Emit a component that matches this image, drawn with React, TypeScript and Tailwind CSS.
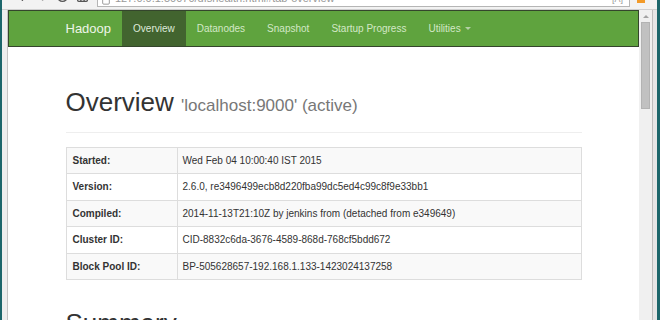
import React from 'react';
import { ArrowLeft, ArrowRight, RotateCw, Home, File } from 'lucide-react';

const rows = [
  { label: 'Started:', value: 'Wed Feb 04 10:00:40 IST 2015' },
  { label: 'Version:', value: '2.6.0, re3496499ecb8d220fba99dc5ed4c99c8f9e33bb1' },
  { label: 'Compiled:', value: '2014-11-13T21:10Z by jenkins from (detached from e349649)' },
  { label: 'Cluster ID:', value: 'CID-8832c6da-3676-4589-868d-768cf5bdd672' },
  { label: 'Block Pool ID:', value: 'BP-505628657-192.168.1.133-1423024137258' },
];

const navItems = ['Overview', 'Datanodes', 'Snapshot', 'Startup Progress', 'Utilities'];

const App: React.FC = () => {
  return (
    <div
      className="w-[660px] h-[320px] overflow-hidden flex bg-[#1c666b] text-[#333]"
      style={{ fontFamily: '"Liberation Sans", Arial, sans-serif' }}
    >
      <div className="w-[2px] shrink-0" />
      {/* browser window */}
      <div className="flex flex-col w-[655px] shrink-0 bg-[#ebebeb]">
        {/* chrome strip, mostly cut off */}
        <div className="h-[10px] flex items-start overflow-hidden border-b border-[#cfcfcf] bg-[#f2f2f2]">
          <div className="flex items-start gap-[7px] pl-[14px] w-[95px] -mt-[10px] text-[#555]">
            <ArrowLeft size={13} strokeWidth={2.5} />
            <ArrowRight size={13} strokeWidth={2.5} className="text-[#aaa]" />
            <RotateCw size={13} strokeWidth={2.5} />
            <Home size={13} strokeWidth={2.5} />
          </div>
          <div className="flex items-start w-[533px] h-[7px] bg-white border border-t-0 border-[#b5b5b5] overflow-hidden">
            <File size={10} className="text-[#888] ml-[3px] -mt-[5px] shrink-0" />
            <span className="text-[11px] leading-[13px] text-[#999] ml-[4px] -mt-[8px] whitespace-nowrap">
              127.0.0.1:50070/dfshealth.html#tab-overview
            </span>
            <span className="ml-auto mr-[6px] text-[9px] leading-[10px] -mt-[6px] text-[#999]">[A]</span>
          </div>
          <div className="ml-[7px] w-[8px] h-[3px] bg-[#f29a28]" />
        </div>

        <div className="flex flex-1 min-h-0">
          {/* left frame */}
          <div className="w-[6px] shrink-0 bg-[#eeeeee] border-r border-[#c4c4c4]" />

          {/* page viewport */}
          <div className="w-[631px] shrink-0 bg-white overflow-hidden">
            <nav className="h-[37px] bg-[#5fa33e] border border-[#34452c] flex">
              <div className="w-[516px] mx-auto flex items-stretch">
                <span className="flex items-center pr-[11px] text-[13px] text-[#eef5e8]">Hadoop</span>
                {navItems.map((item, i) => (
                  <span
                    key={item}
                    className={`flex items-center px-[11px] text-[10px] ${
                      i === 0 ? 'bg-[#42642f] text-[#dfeada]' : 'text-[#d3e8c6]'
                    }`}
                  >
                    {item}
                    {item === 'Utilities' && (
                      <span className="ml-[4px] w-0 h-0 border-x-[3px] border-t-[3px] border-x-transparent border-t-[#b4d0a6]" />
                    )}
                  </span>
                ))}
              </div>
            </nav>

            <div className="w-[516px] mx-auto">
              <div className="mt-[41px] pb-[11px] border-b border-[#eeeeee]">
                <h1 className="text-[26px] leading-[28.6px] whitespace-nowrap">
                  Overview{' '}
                  <span className="text-[17px] text-[#777]">'localhost:9000' (active)</span>
                </h1>
              </div>

              <div className="mt-[14px] border-x border-b border-[#dddddd] text-[10px]">
                {rows.map((row, i) => (
                  <div
                    key={row.label}
                    className={`flex h-[25.5px] box-content border-t border-[#dddddd] ${
                      i % 2 === 0 ? 'bg-[#f9f9f9]' : 'bg-white'
                    }`}
                  >
                    <div className="w-[111px] shrink-0 border-r border-[#dddddd] flex items-center pl-[6px] font-bold">
                      {row.label}
                    </div>
                    <div className="flex items-center pl-[5px] whitespace-nowrap">{row.value}</div>
                  </div>
                ))}
              </div>

              <h1 className="mt-[29px] text-[26px] leading-[28.6px]">Summary</h1>
            </div>
          </div>

          {/* scrollbar */}
          <div className="w-[13px] shrink-0 bg-[#f0f0f0] flex flex-col items-center">
            <span className="mt-[5px] w-0 h-0 border-x-[3px] border-b-[3px] border-x-transparent border-b-[#a3a3a3]" />
            <div className="mt-[4px] w-[9px] h-[87px] bg-[#c1c1c1] border border-[#b3b3b3]" />
          </div>
          <div className="w-[1px] shrink-0 bg-[#bdbdbd]" />
          <div className="w-[4px] shrink-0 bg-[#e6e6e6]" />
        </div>
      </div>
    </div>
  );
};

export default App;
